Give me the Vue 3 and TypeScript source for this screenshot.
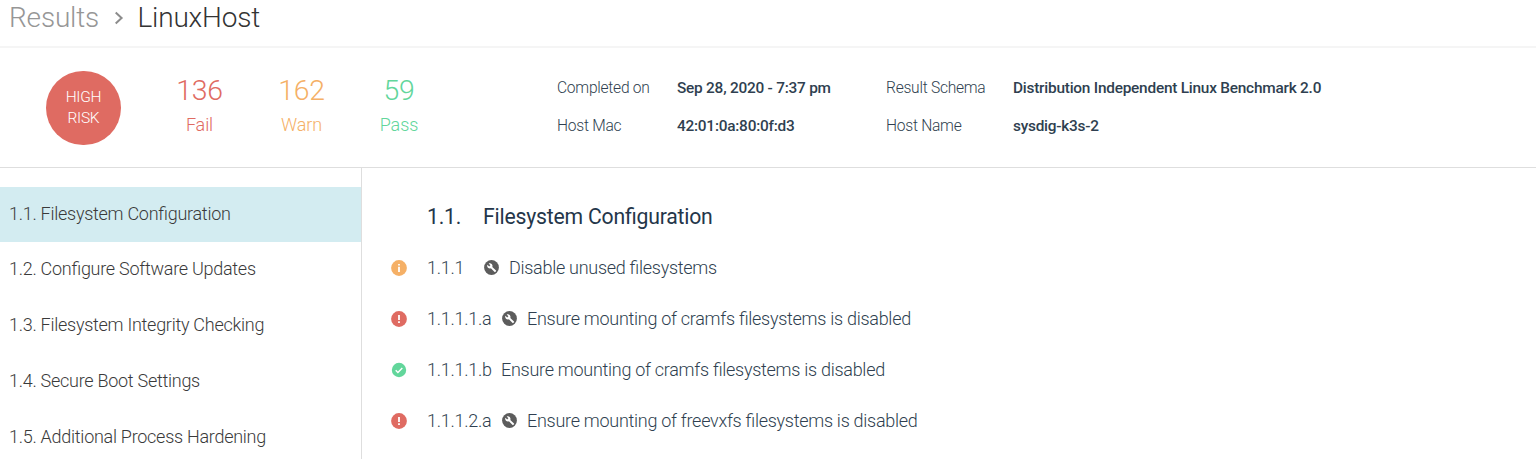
<script setup lang="ts">
type Status = 'warn' | 'fail' | 'pass'

interface Check {
  id: string
  status: Status
  fixable: boolean
  label: string
}

const totals: { kind: Status; count: number; label: string }[] = [
  { kind: 'fail', count: 136, label: 'Fail' },
  { kind: 'warn', count: 162, label: 'Warn' },
  { kind: 'pass', count: 59, label: 'Pass' },
]

const sections: string[] = [
  '1.1. Filesystem Configuration',
  '1.2. Configure Software Updates',
  '1.3. Filesystem Integrity Checking',
  '1.4. Secure Boot Settings',
  '1.5. Additional Process Hardening',
]

const checks: Check[] = [
  { id: '1.1.1', status: 'warn', fixable: true, label: 'Disable unused filesystems' },
  { id: '1.1.1.1.a', status: 'fail', fixable: true, label: 'Ensure mounting of cramfs filesystems is disabled' },
  { id: '1.1.1.1.b', status: 'pass', fixable: false, label: 'Ensure mounting of cramfs filesystems is disabled' },
  { id: '1.1.1.2.a', status: 'fail', fixable: true, label: 'Ensure mounting of freevxfs filesystems is disabled' },
]
</script>

<template>
  <div class="page">
    <header class="crumbs">
      <span class="parent">Results</span>
      <svg class="chevron" viewBox="0 0 10 14"><path d="M1.700 1.500 7.600 7l-5.900 5.500" /></svg>
      <span class="current">LinuxHost</span>
    </header>

    <section class="summary">
      <div class="risk"><span>HIGH</span><span>RISK</span></div>
      <div class="totals">
        <div v-for="t in totals" :key="t.kind" class="total" :class="t.kind">
          <span class="count">{{ t.count }}</span>
          <span class="name">{{ t.label }}</span>
        </div>
      </div>
      <dl class="meta">
        <dt>Completed on</dt>
        <dd>Sep 28, 2020 - 7:37 pm</dd>
        <dt>Result Schema</dt>
        <dd>Distribution Independent Linux Benchmark 2.0</dd>
        <dt>Host Mac</dt>
        <dd>42:01:0a:80:0f:d3</dd>
        <dt>Host Name</dt>
        <dd>sysdig-k3s-2</dd>
      </dl>
    </section>

    <div class="body">
      <nav class="side">
        <a v-for="(s, i) in sections" :key="s" class="item" :class="{ active: i === 0 }">{{ s }}</a>
      </nav>
      <main class="main">
        <h2><span class="num">1.1.</span><span>Filesystem Configuration</span></h2>
        <div v-for="c in checks" :key="c.id" class="check">
          <svg class="status" :class="c.status" viewBox="0 0 16 16">
            <circle cx="8" cy="8" :r="c.status === 'pass' ? 7.2 : 7.9" />
            <path v-if="c.status === 'warn'" d="M7.1 4h1.8v1.6H7.1zM7.1 6.8h1.8V12H7.1z" />
            <path v-else-if="c.status === 'fail'" d="M7.1 3.9h1.8v5H7.1zM7.1 10.2h1.8V12H7.1z" />
            <path v-else class="tick" d="m4.7 8.3 2.2 2.1 4.4-4.5" />
          </svg>
          <span class="id" :class="{ short: c.id.length < 6 }">{{ c.id }}</span>
          <svg v-if="c.fixable" class="wrench" viewBox="0 0 15 15">
            <circle cx="7.5" cy="7.5" r="7.4" />
            <path d="M12 10.6 8.3 6.9c.4-1 .2-2.1-.6-2.9-.8-.8-2-1-3-.5L6.4 5.2 5.2 6.4 3.400 4.700c-.5 1-.2 2.200.600 3 .8.8 1.900 1 2.900.6l3.700 3.700c.2.2.4.2.6 0l.8-.8c.2-.2.2-.4 0-.6z" />
          </svg>
          <span class="label">{{ c.label }}</span>
        </div>
      </main>
    </div>
  </div>
</template>

<style>
body {
  background: #fff;
}
</style>

<style scoped>
.page {
  display: flex;
  flex-direction: column;
  width: 1536px;
  height: 459px;
  overflow: hidden;
  font-family: Roboto, "Liberation Sans", sans-serif;
  font-feature-settings: "liga" 1;
  font-weight: 340;
  color: #2f3f50;
}
.crumbs {
  display: flex;
  flex: none;
  align-items: center;
  height: 46px;
  box-sizing: border-box;
  padding: 0 0 11px 9px;
  font-size: 28px;
  letter-spacing: -0.18px;
  line-height: 34px;
}
.parent {
  width: 105px;
  color: #969696;
}
.chevron {
  width: 10px;
  height: 14px;
  margin-right: 13.5px;
  fill: none;
  stroke: #8c8c8c;
  stroke-width: 2;
}
.current {
  color: #333;
}
.summary {
  display: flex;
  flex: none;
  height: 122px;
  box-sizing: border-box;
  border-top: 2px solid #f5f5f5;
  border-bottom: 1px solid #dedede;
}
.risk {
  display: flex;
  flex-direction: column;
  align-items: center;
  justify-content: center;
  flex: none;
  width: 74.5px;
  height: 74.5px;
  margin: 22.5px 0 0 46.2px;
  border-radius: 50%;
  background: #df6b62;
  color: #fff;
  font-size: 15.5px;
  letter-spacing: -0.3px;
  line-height: 21px;
}
.totals {
  display: flex;
  margin: 22px 0 0 27.8px;
}
.total {
  display: flex;
  flex-direction: column;
  align-items: center;
  width: 102px;
}
.total.pass {
  width: 93px;
}
.count {
  font-size: 28.4px;
  letter-spacing: -0.3px;
  line-height: 41px;
}
.name {
  font-size: 18px;
  letter-spacing: -0.1px;
  line-height: 27px;
}
.total.fail { color: #df6b62; }
.total.warn { color: #f5b066; }
.total.pass { color: #62d69b; }
.meta {
  display: grid;
  grid-template-columns: 120px 209px 127px 340px;
  grid-auto-rows: 38px;
  margin: 21px 0 0 111.5px;
  font-size: 15.6px;
  letter-spacing: -0.26px;
  line-height: 38px;
  white-space: nowrap;
}
.meta dd {
  margin: 0;
  font-weight: 500;
  font-size: 15.4px;
  letter-spacing: -0.23px;
}
.body {
  display: flex;
  flex: 1;
  min-height: 0;
}
.side {
  display: flex;
  flex-direction: column;
  flex: none;
  width: 362px;
  box-sizing: border-box;
  padding-top: 18.8px;
  border-right: 1px solid #dedede;
}
.item {
  flex: none;
  height: 55.7px;
  padding-left: 9px;
  line-height: 54.3px;
  font-size: 18px;
  letter-spacing: -0.27px;
  color: #3a3a3a;
}
.item.active {
  background: #d3ecf1;
}
.main {
  padding: 24px 0 0 29px;
}
h2 {
  display: flex;
  margin: 0 0 0 36px;
  font-size: 21.2px;
  letter-spacing: -0.2px;
  line-height: 50px;
  font-weight: 400;
  color: #24364a;
}
.num {
  width: 56px;
}
.check {
  display: flex;
  align-items: center;
  height: 51px;
  font-size: 18px;
  letter-spacing: -0.28px;
  white-space: nowrap;
}
.status {
  width: 16px;
  height: 16px;
  margin-right: 20px;
  fill: #fff;
}
.status.warn circle { fill: #f5b066; }
.status.fail circle { fill: #df6b62; }
.status.pass circle { fill: #62d69b; }
.tick {
  fill: none;
  stroke: #fff;
  stroke-width: 1.4;
}
.id {
  width: 74px;
}
.id.short {
  width: 56px;
}
.wrench {
  width: 15px;
  height: 15px;
  margin: 0 10px 0 1px;
  fill: #fff;
}
.wrench circle {
  fill: #5c5c5c;
}
</style>
